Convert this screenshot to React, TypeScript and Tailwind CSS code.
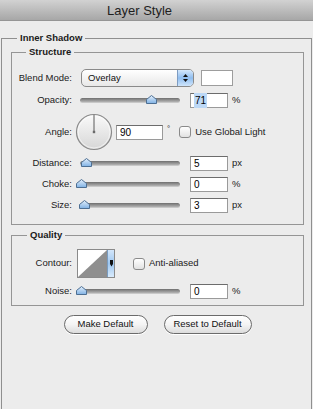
import React from 'react';

const font = "font-['Liberation_Sans',Arial,sans-serif]";

const Label = ({ children }: { children: React.ReactNode }) => (
  <div className="w-[60px] shrink-0 text-right">{children}</div>
);

const Thumb = () => (
  <svg width="11" height="9" viewBox="0 0 11 9">
    <defs>
      <linearGradient id="thumbFill" x1="0" y1="0" x2="0" y2="1">
        <stop offset="0" stopColor="#e4f0fc" />
        <stop offset="1" stopColor="#7fb1e4" />
      </linearGradient>
    </defs>
    <path d="M0.5 4.5 L5.5 0.5 L10.5 4.5 V8.5 H0.5 Z" fill="url(#thumbFill)" stroke="#4d6f93" strokeWidth="1" />
  </svg>
);

const Slider = ({ pos }: { pos: number }) => (
  <div className="relative w-[100px] h-[5px] shrink-0 rounded-full bg-gradient-to-b from-[#6f6f6f] to-[#b4b4b4] border-b border-[#c8c8c8]">
    <div className="absolute top-[-3px]" style={{ left: pos - 5.5 }}>
      <Thumb />
    </div>
  </div>
);

const Field = ({ children, w = 'w-[38px]', h = 'h-[15px]' }: { children: React.ReactNode; w?: string; h?: string }) => (
  <div className={`${w} ${h} shrink-0 flex items-center pl-[3px] bg-white border border-[#9a9a9a] border-t-[#6c6c6c] text-[10px] text-black`}>
    {children}
  </div>
);

const Checkbox = () => (
  <div className="w-[12px] h-[12px] shrink-0 rounded-[3px] border border-[#8a8a8a] bg-gradient-to-b from-white to-[#e2e2e2]" />
);

const SliderRow = ({ label, pos, value, unit }: { label: string; pos: number; value: React.ReactNode; unit: string }) => (
  <div className="flex items-center h-[16px]">
    <Label>{label}</Label>
    <div className="ml-[8px]">
      <Slider pos={pos} />
    </div>
    <div className="ml-[10px]">
      <Field>{value}</Field>
    </div>
    <div className="ml-[4px]">{unit}</div>
  </div>
);

const Dial = () => (
  <svg width="38" height="38" viewBox="0 0 38 38">
    <defs>
      <linearGradient id="dialFill" x1="0" y1="0" x2="0" y2="1">
        <stop offset="0" stopColor="#fafafa" />
        <stop offset="1" stopColor="#d6d6d6" />
      </linearGradient>
    </defs>
    <circle cx="19" cy="19" r="17.5" fill="url(#dialFill)" stroke="#8a8a8a" strokeWidth="1.2" />
    <circle cx="19" cy="19" r="16" fill="none" stroke="#ffffff" strokeWidth="0.8" opacity="0.7" />
    <line x1="19" y1="19" x2="19" y2="2" stroke="#5a5a5a" strokeWidth="1" />
    <rect x="17.8" y="17.8" width="2.4" height="2.4" fill="#6a6a6a" />
  </svg>
);

const Contour = () => (
  <div className="flex h-[29px] w-[38px] border border-[#8a8a8a] ml-[5px]">
    <svg width="29" height="27" viewBox="0 0 29 27" className="block">
      <rect width="29" height="27" fill="#ffffff" />
      <polygon points="0,27 29,0 29,27" fill="#8f8f8f" />
    </svg>
    <div className="flex-1 flex items-center justify-center bg-gradient-to-b from-[#d3e6fa] via-[#9ec7f0] to-[#d9ebfc] border-l border-[#7a9cc0]">
      <svg width="5" height="7" viewBox="0 0 5 7">
        <path d="M1 0 H4 V4 L2.5 6.5 L1 4 Z" fill="#111" />
      </svg>
    </div>
  </div>
);

const Legend = ({ children, ml }: { children: React.ReactNode; ml: string }) => (
  <legend className={`${ml} px-[3px] leading-[12px] font-bold text-[#1a1a1a]`}>{children}</legend>
);

const Button = ({ children, w }: { children: React.ReactNode; w: string }) => (
  <button className={`${w} h-[19px] rounded-full border border-[#6b6b6b] bg-gradient-to-b from-white via-[#f4f4f4] to-[#dcdcdc] text-[9.5px] text-[#111] shadow-[0_1px_0_#ffffff]`}>
    {children}
  </button>
);

const App: React.FC = () => {
  return (
    <div className={`w-[313px] h-[409px] flex flex-col overflow-hidden bg-[#ececec] text-[9.5px] text-[#1a1a1a] ${font}`}>
      {/* Title bar */}
      <div className="h-[21px] shrink-0 flex items-center pl-[107px] pt-[1px] bg-gradient-to-b from-[#d2d2d2] to-[#a7a7a7] border-b border-[#959595] text-[13px] text-[#1e1e1e]">
        Layer Style
      </div>

      <div className="flex-1 flex flex-col pt-[11px] pl-[1px] pr-[1px]">
        <fieldset className="flex-1 border-t border-l border-r border-[#8f8f8f] pl-[9px] pr-[7px]">
          <Legend ml="ml-[6px]">Inner Shadow</Legend>

          {/* Structure */}
          <fieldset className="mt-[2px] border border-[#959595] pt-[11px] pb-[11px]">
            <Legend ml="ml-[14px]">Structure</Legend>

            <div className="flex items-center h-[18px]">
              <Label>Blend Mode:</Label>
              <div className="ml-[9px] flex w-[113px] h-[18px] rounded-[5px] border border-[#8a8a8a] overflow-hidden bg-gradient-to-b from-white to-[#e8e8e8]">
                <div className="flex-1 flex items-center pl-[6px] text-[#111]">Overlay</div>
                <div className="w-[16px] flex flex-col items-center justify-center gap-[2px] border-l border-[#7d9cc2] bg-gradient-to-b from-[#d5e8fb] via-[#8fbdef] to-[#cfe5fb]">
                  <svg width="5" height="3" viewBox="0 0 5 3"><path d="M0 3 L2.5 0 L5 3 Z" fill="#111" /></svg>
                  <svg width="5" height="3" viewBox="0 0 5 3"><path d="M0 0 L2.5 3 L5 0 Z" fill="#111" /></svg>
                </div>
              </div>
              <div className="ml-[7px] w-[32px] h-[16px] bg-white border border-[#9d9d9d]" />
            </div>

            <div className="mt-[5px]">
              <SliderRow label="Opacity:" pos={71} value={<span className="bg-[#bcd8f6] px-[1px]">71</span>} unit="%" />
            </div>

            <div className="mt-[5px] flex items-center h-[38px]">
              <Label>Angle:</Label>
              <div className="ml-[3px]">
                <Dial />
              </div>
              <div className="ml-[3px]">
                <Field w="w-[47px]" h="h-[15px]">90</Field>
              </div>
              <div className="ml-[4px] self-start mt-[10px] text-[8px]">°</div>
              <div className="ml-[9px]">
                <Checkbox />
              </div>
              <div className="ml-[4px]">Use Global Light</div>
            </div>

            <div className="mt-[4px]">
              <SliderRow label="Distance:" pos={6} value="5" unit="px" />
            </div>
            <div className="mt-[5px]">
              <SliderRow label="Choke:" pos={1} value="0" unit="%" />
            </div>
            <div className="mt-[5px]">
              <SliderRow label="Size:" pos={4} value="3" unit="px" />
            </div>
          </fieldset>

          {/* Quality */}
          <fieldset className="mt-[4px] border border-[#959595] pt-[8px] pb-[6px]">
            <Legend ml="ml-[15px]">Quality</Legend>

            <div className="flex items-center h-[29px]">
              <Label>Contour:</Label>
              <Contour />
              <div className="ml-[18px]">
                <Checkbox />
              </div>
              <div className="ml-[4px]">Anti-aliased</div>
            </div>

            <div className="mt-[5px]">
              <SliderRow label="Noise:" pos={1} value="0" unit="%" />
            </div>
          </fieldset>

          <div className="mt-[9px] flex justify-center gap-[16px]">
            <Button w="w-[84px]">Make Default</Button>
            <Button w="w-[88px]">Reset to Default</Button>
          </div>
        </fieldset>
      </div>
    </div>
  );
};

export default App;
